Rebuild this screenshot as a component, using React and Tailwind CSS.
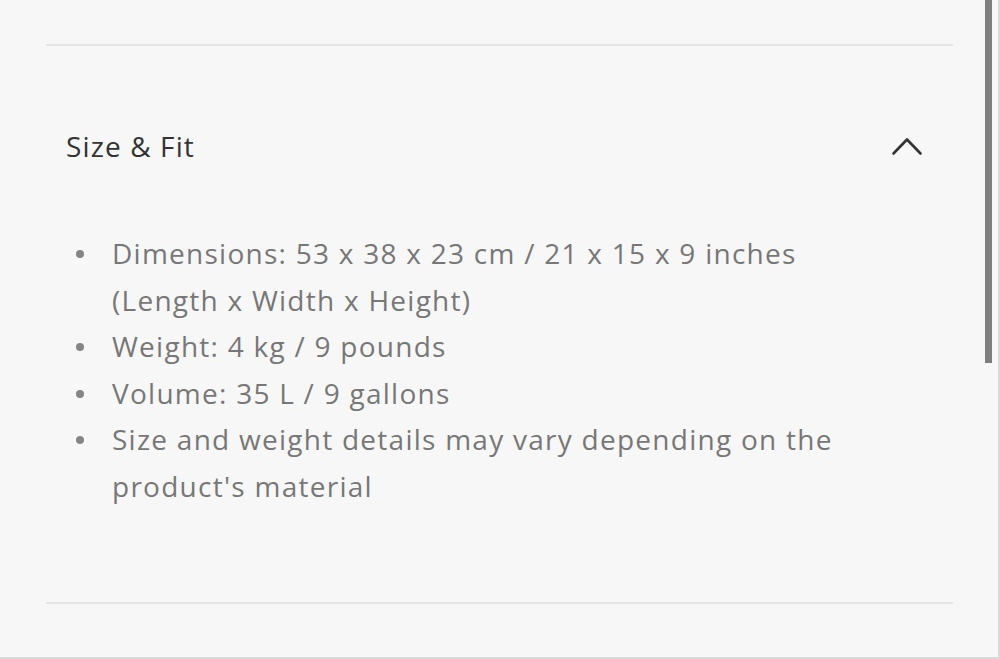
const items = [
  'Dimensions: 53 x 38 x 23 cm / 21 x 15 x 9 inches (Length x Width x Height)',
  'Weight: 4 kg / 9 pounds',
  'Volume: 35 L / 9 gallons',
  "Size and weight details may vary depending on the product's material",
];

function Chevron() {
  return (
    <svg width="32" height="20" viewBox="0 0 32 20" fill="none" className="text-[#333333]">
      <path d="M2.5 17.5 L16 3.5 L29.5 17.5" stroke="currentColor" strokeWidth="2.6" strokeLinecap="round" strokeLinejoin="round" />
    </svg>
  );
}

export default function App() {
  return (
    <div
      className="relative h-[659px] w-[1000px] overflow-hidden bg-[#f7f7f7] border-r-2 border-b-2 border-[#d9d9d9]"
      style={{ fontFamily: '"Open Sans", "Noto Sans", sans-serif' }}
    >
      <div className="pl-[46px] pr-[45px] pt-[44px]">
        <div className="h-[2px] bg-[#e4e4e4]" />

        {/* Size & Fit section */}
        <div className="flex items-center justify-between pl-[20px] pr-[30px] pt-[80px] pb-[64px]">
          <h3 className="text-[28px] leading-[40px] tracking-[0.04em] text-[#333333]">Size &amp; Fit</h3>
          <Chevron />
        </div>

        <ul className="w-[840px] pl-[66px] pb-[93px] text-[28px] leading-[46.5px] tracking-[0.045em] text-[#777777]">
          {items.map((item) => (
            <li key={item} className="relative">
              <span className="absolute -left-[36px] top-[20px] h-[8px] w-[8px] rounded-full bg-[#858585]" />
              {item}
            </li>
          ))}
        </ul>

        <div className="h-[2px] bg-[#e4e4e4]" />
      </div>

      {/* scrollbar */}
      <div className="absolute right-[6px] top-0 h-[363px] w-[7px] bg-[#7f7f7f]" />
    </div>
  );
}
